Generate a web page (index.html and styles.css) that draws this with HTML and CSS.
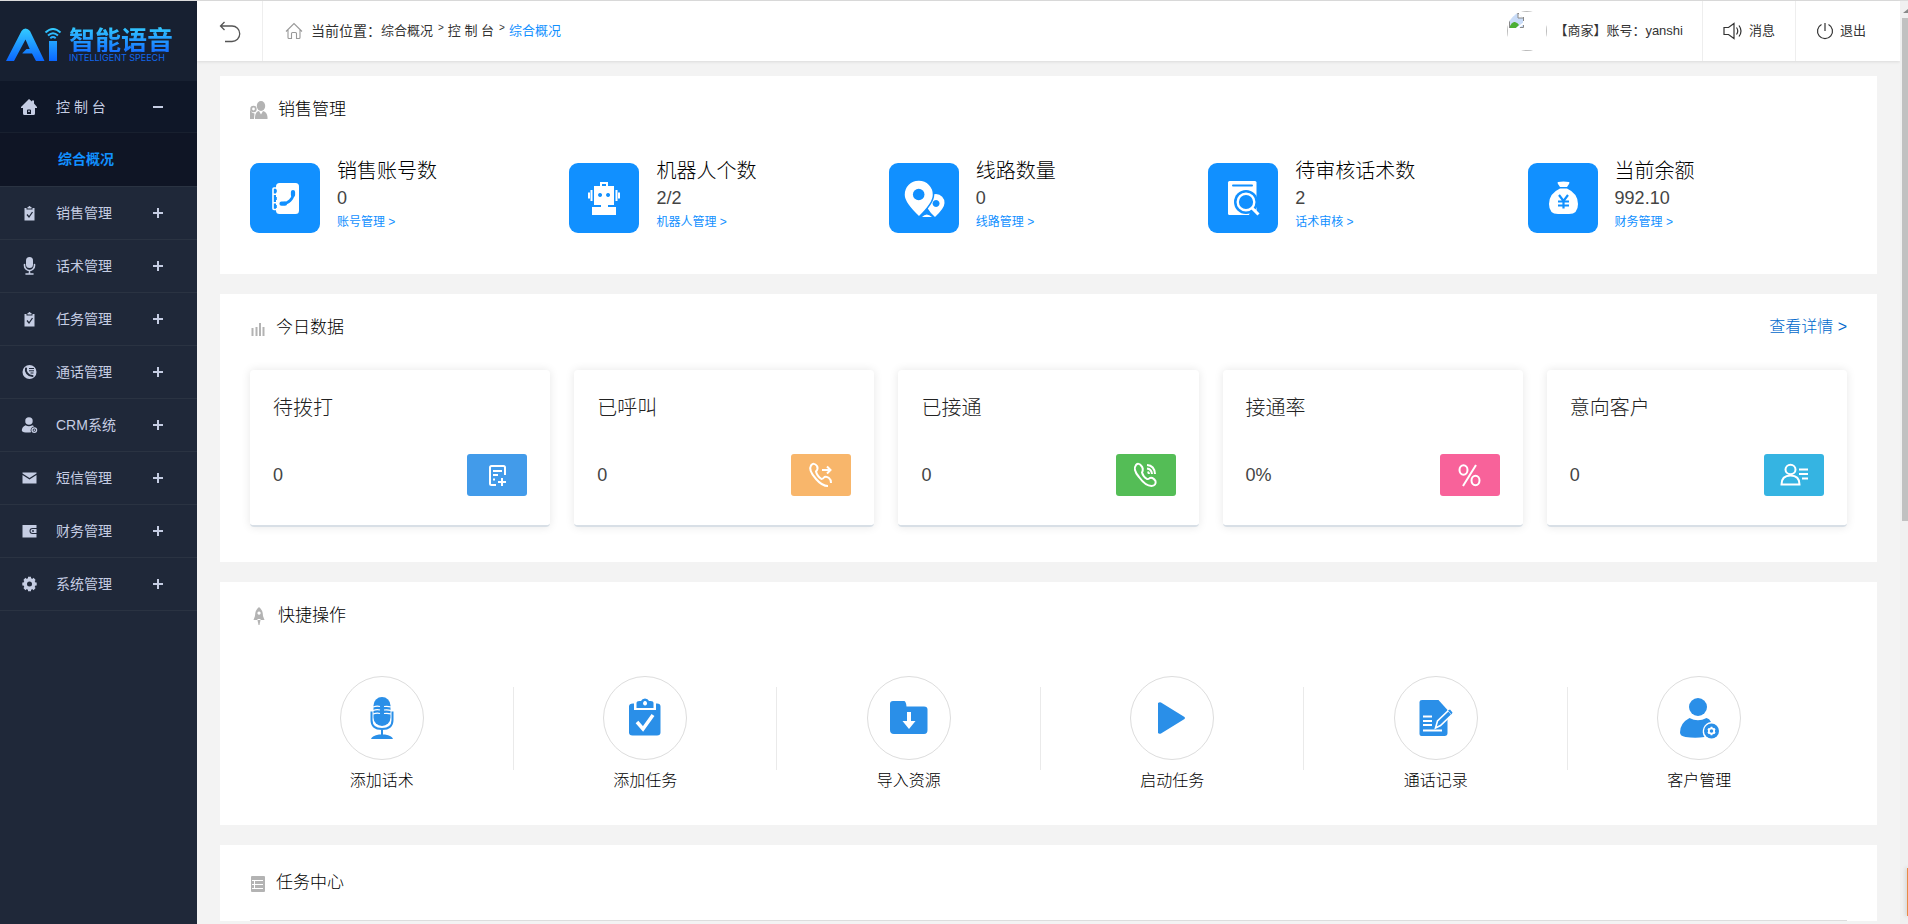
FILE: index.html
```html
<!DOCTYPE html>
<html lang="zh-CN">
<head>
<meta charset="utf-8">
<title>智能语音 - 综合概况</title>
<link rel="stylesheet" href="styles.css">
</head>
<body>
<svg class="defs" aria-hidden="true">
  <symbol id="i-plus" viewBox="0 0 10 10"><path d="M0 5h10M5 0v10" stroke="currentColor" stroke-width="2"/></symbol>
  <symbol id="i-minus" viewBox="0 0 10 10"><path d="M0 5h10" stroke="currentColor" stroke-width="2"/></symbol>
  <symbol id="i-home" viewBox="0 0 16 16"><path fill="currentColor" fill-rule="evenodd" d="M8 0l3 2.600V1.500h2V4.500L16 8v1h-2v5.500q0 1.500-1.500 1.500h-9Q2 16 2 14.500V9H0V8zM6 15h4v-3.500q0-1-1-1H7q-1 0-1 1zm1.200-3.500h1.600V13H7.200z"/></symbol>
  <symbol id="i-clip" viewBox="0 0 16 16"><path fill="currentColor" fill-rule="evenodd" d="M3 3h2v1.500h6V3h2v12.500H3zM6 3V2h1a1 1 0 0 1 2 0h1v1.500H6z"/><path d="M5.500 9.500l2 2.500 3.500-5" fill="none" stroke="#1f2839" stroke-width="1.300"/></symbol>
  <symbol id="i-mic" viewBox="0 0 16 18"><rect x="4.500" y="0" width="7" height="11" rx="3.500" fill="currentColor"/><path d="M3 7.500v1a5 5 0 0 0 10 0v-1M8 13.500V17M4.500 17h7" fill="none" stroke="currentColor" stroke-width="1.600" stroke-linecap="round"/></symbol>
  <symbol id="i-call" viewBox="0 0 16 16"><circle cx="8" cy="8" r="7" fill="currentColor"/><path d="M4.500 4.500c-1 3 2 7.500 6.500 7.500" fill="none" stroke="#1f2839" stroke-width="2" stroke-linecap="round"/><path d="M7.500 4.500h5M7.500 6.800h5M9 9h3" stroke="#1f2839" stroke-width="1"/></symbol>
  <symbol id="i-user" viewBox="0 0 30 30"><ellipse cx="14" cy="7.500" rx="7" ry="7" fill="currentColor"/><path fill="currentColor" d="M7.500 15.500q6.500 3.500 13 0q2 .8 3 2.500a7 7 0 0 0-5.500 10.500q-7 1.500-13.500 0Q.5 27.500.5 25q.5-6.500 7-9.500z"/><circle cx="24" cy="24.500" r="4.300" fill="none" stroke="currentColor" stroke-width="2.400"/><circle cx="24" cy="24.500" r="1.600" fill="currentColor"/></symbol>
  <symbol id="i-mail" viewBox="0 0 16 16"><path fill="currentColor" d="M1 2.500h14v1L8 8 1 3.500zM1 5l7 4.500L15 5v8.500H1z"/></symbol>
  <symbol id="i-wallet" viewBox="0 0 16 16"><path fill="currentColor" fill-rule="evenodd" d="M1 2h14v3h-4a3 3 0 0 0 0 6h4v3.500H1z"/><path fill="currentColor" d="M11 6h4v4h-4a2 2 0 0 1 0-4z"/><circle cx="11.500" cy="8" r=".9" fill="#1f2839"/></symbol>
  <symbol id="i-gear" viewBox="0 0 16 16"><circle cx="8" cy="8" r="4.300" fill="none" stroke="currentColor" stroke-width="3.600"/><path d="M8 .8v14.400M.8 8h14.400M2.900 2.900l10.200 10.200M13.100 2.900L2.900 13.100" stroke="currentColor" stroke-width="3" stroke-dasharray="3.200 8 3.200"/></symbol>
</svg>
<div class="app">
  <aside class="sidebar">
    <a class="logo" href="#" aria-label="智能语音">
      <svg class="logo-mark" width="56" height="35" viewBox="0 0 56 35">
        <defs>
          <linearGradient id="lg" gradientUnits="userSpaceOnUse" x1="0" y1="0" x2="0" y2="34"><stop offset="0" stop-color="#35d0ff"/><stop offset="1" stop-color="#0a66ff"/></linearGradient>
        </defs>
        <path fill="url(#lg)" fill-rule="evenodd" d="M0 34L15.500 4Q17 1.500 19.500 1.500T24 4l14.500 30H30l-4-7.500H16.500V26l4-4h3.200L19.500 12.500 8 34z"/>
        <path fill="url(#lg)" d="M43 14h8v20h-8z"/>
        <path d="M39.500 5.500q7.500-7 15 0M42 8.500q5-4.500 10 0M44.300 11.200q2.700-2.400 5.400 0" fill="none" stroke="url(#lg)" stroke-width="2"/>
      </svg>
      <span class="logo-text"><span class="logo-cn">智能语音</span><span class="logo-en">INTELLIGENT SPEECH</span></span>
    </a>
    <nav class="menu">
      <a class="item open" href="#"><svg class="mi"><use href="#i-home"/></svg><span>控 制 台</span><svg class="sign"><use href="#i-minus"/></svg></a>
      <a class="sub" href="#">综合概况</a>
      <a class="item" href="#"><svg class="mi"><use href="#i-clip"/></svg><span>销售管理</span><svg class="sign"><use href="#i-plus"/></svg></a>
      <a class="item" href="#"><svg class="mi tall"><use href="#i-mic"/></svg><span>话术管理</span><svg class="sign"><use href="#i-plus"/></svg></a>
      <a class="item" href="#"><svg class="mi"><use href="#i-clip"/></svg><span>任务管理</span><svg class="sign"><use href="#i-plus"/></svg></a>
      <a class="item" href="#"><svg class="mi"><use href="#i-call"/></svg><span>通话管理</span><svg class="sign"><use href="#i-plus"/></svg></a>
      <a class="item" href="#"><svg class="mi"><use href="#i-user"/></svg><span>CRM系统</span><svg class="sign"><use href="#i-plus"/></svg></a>
      <a class="item" href="#"><svg class="mi"><use href="#i-mail"/></svg><span>短信管理</span><svg class="sign"><use href="#i-plus"/></svg></a>
      <a class="item" href="#"><svg class="mi"><use href="#i-wallet"/></svg><span>财务管理</span><svg class="sign"><use href="#i-plus"/></svg></a>
      <a class="item" href="#"><svg class="mi"><use href="#i-gear"/></svg><span>系统管理</span><svg class="sign"><use href="#i-plus"/></svg></a>
    </nav>
  </aside>

  <div class="page">
    <header class="topbar">
      <button class="back" type="button" aria-label="返回"><svg width="22" height="22" viewBox="0 0 22 22" fill="none" stroke="#555" stroke-width="1.300"><path d="M1.500 5H13a7.200 7.200 0 0 1 0 15.500H6M5.500 1l-4 4 4 4"/></svg></button>
      <nav class="crumbs">
        <svg width="18" height="18" viewBox="0 0 18 18" fill="none" stroke="#999" stroke-width="1.100"><path d="M1 9.500L9 1.500l8 8M3 8v7.500q0 1 1 1h2.500v-5q0-1 1-1h3q1 0 1 1v5H14q1 0 1-1V8"/></svg>
        <span class="where">当前位置：</span><a href="#">综合概况</a><span class="gt">&gt;</span><a href="#">控 制 台</a><span class="gt">&gt;</span><a class="current" href="#">综合概况</a>
      </nav>
      <div class="account">
        <span class="avatar" role="img" aria-label="头像"><svg width="40" height="40" viewBox="0 0 40 40"><path d="M2 2h9l5 5v10H2z" fill="#c9dcf8"/><path d="M11 2v5h5" fill="#fff" stroke="#888"/><path d="M2 17q3-7 6-6t4 3l-3 3z" fill="#4caf35"/><path d="M9 17l8-6v2l-5 4z" fill="#fff"/><path d="M2.500 5v12M6 2.500h6M16.500 6v4M16.500 14v2.500H13" fill="none" stroke="#888"/><path d="M.5.500h39v39H.500z" fill="none" stroke="#bbb"/></svg></span>
        <span class="label">【商家】账号：yanshi</span>
      </div>
      <a class="tool" href="#"><svg width="20" height="18" viewBox="0 0 20 18" fill="none" stroke="#333" stroke-width="1.200"><path d="M1 5.500h4.500L11 1.500v15l-5.500-4H1zM13.500 5.500q2.500 3.500 0 7M16 3.500q4 5.500 0 11"/></svg><span class="label">消息</span></a>
      <a class="tool last" href="#"><svg width="18" height="18" viewBox="0 0 18 18" fill="none" stroke="#333" stroke-width="1.200"><path d="M9 1v8M5.500 2.500a7.500 7.500 0 1 0 7 0"/></svg><span class="label">退出</span></a>
    </header>

    <main class="content">
      <section class="panel">
        <div class="head"><svg class="hi" viewBox="0 0 18 18" fill="#b3b3b3"><ellipse cx="11" cy="5" rx="4.200" ry="5"/><path d="M5 16q.5-5.500 4-6l2 3.500 2-3.500q4 .8 4.500 6v2H5z"/><circle cx="3.500" cy="8" r="2.300" fill="none" stroke="#b3b3b3" stroke-width="1.800"/><path d="M0 18V8q1 4 4.500 4.500L4 18z"/></svg><h2>销售管理</h2></div>
        <div class="stats">
          <div class="stat">
            <span class="tile"><svg viewBox="0 0 70 70" fill="#fff"><rect x="26" y="20" width="23" height="31" rx="3.500"/><path d="M26 25h-2q-1 0-1 1v19.500q0 1 1 1h2M23 31.200h3M23 39.800h3" fill="none" stroke="#fff" stroke-width="1.600"/><path d="M26 24v23" stroke="#1190ff" stroke-width="1.600" stroke-dasharray="0 2.500 3 4.500 3 5 3 9"/><path d="M33 40.500c5.500 0 10-4.500 10.300-10" fill="none" stroke="#1190ff" stroke-width="2.800"/><path d="M31.500 40.700h3.500M43 32v-3" fill="none" stroke="#1190ff" stroke-width="4.200" stroke-linecap="round"/></svg></span>
            <div class="info"><h3>销售账号数</h3><b>0</b><a href="#">账号管理 &gt;</a></div>
          </div>
          <div class="stat">
            <span class="tile"><svg viewBox="0 0 70 70" fill="#fff"><path d="M32 23v-3h6v3" fill="none" stroke="#fff" stroke-width="2"/><path fill-rule="evenodd" d="M25 23h20v19h-6v2h8v8H23v-8h9v-2h-7zM31 30a2 2 0 1 0 .1 0zM39 30a2 2 0 1 0 .1 0z"/><path d="M22.500 27v11M47.500 27v11M20 29.500v6M50 29.500v6" stroke="#fff" stroke-width="2"/></svg></span>
            <div class="info"><h3>机器人个数</h3><b>2/2</b><a href="#">机器人管理 &gt;</a></div>
          </div>
          <div class="stat">
            <span class="tile"><svg viewBox="0 0 70 70" fill="#fff"><path fill-rule="evenodd" d="M47 31a8.500 8.500 0 0 1 8.500 9q0 5-9.500 14Q36 45 38 39a9 9 0 0 1 9-8zm0 6a3.500 3.500 0 1 0 .1 0z"/><path d="M30 17a14.500 14.500 0 0 1 14.500 15q0 8-14.500 22Q15 40 15 32A14.500 14.500 0 0 1 30 17z" stroke="#1190ff" stroke-width="1.500"/><path d="M33 54q4.500-5 10 0z"/><circle cx="29.700" cy="31.500" r="5.800" fill="#1190ff"/></svg></span>
            <div class="info"><h3>线路数量</h3><b>0</b><a href="#">线路管理 &gt;</a></div>
          </div>
          <div class="stat">
            <span class="tile"><svg viewBox="0 0 70 70" fill="#fff"><rect x="20" y="18" width="28.500" height="34" rx="1.500"/><path d="M25 22.500h19" stroke="#1190ff" stroke-width="2" stroke-linecap="round"/><circle cx="38" cy="39" r="12" fill="#1190ff"/><path d="M44 44l6 8h-9z" fill="#1190ff"/><circle cx="38" cy="39" r="8.300" fill="none" stroke="#fff" stroke-width="2.400"/><path d="M44 45l6.500 6.500" stroke="#fff" stroke-width="3"/></svg></span>
            <div class="info"><h3>待审核话术数</h3><b>2</b><a href="#">话术审核 &gt;</a></div>
          </div>
          <div class="stat">
            <span class="tile"><svg viewBox="0 0 70 70" fill="#fff"><path d="M30 19q5.500-1 11 0 1 .6 0 2l-2 3h-7l-2-3q-1-1.400 0-2zM32 25.500h7q11 5 11 15.500 0 10-9 10H30q-9 0-9-10 0-10.500 11-15.500z"/><path d="M31 32l4.500 6 4.500-6M30 38.500h11M30 42.500h11M35.500 38v7.500" fill="none" stroke="#1190ff" stroke-width="2.200"/></svg></span>
            <div class="info"><h3>当前余额</h3><b>992.10</b><a href="#">财务管理 &gt;</a></div>
          </div>
        </div>
      </section>

      <section class="panel">
        <div class="head"><svg class="hi low" viewBox="0 0 16 18"><path d="M2.500 17V9M6.500 17V8M10 17V4M13.500 17V8" stroke="#b3b3b3" stroke-width="2"/></svg><h2>今日数据</h2><a class="more" href="#">查看详情 &gt;</a></div>
        <div class="cards">
          <article class="card"><h3>待拨打</h3><div class="row"><b>0</b><span class="badge blue"><svg viewBox="0 0 28 28"><path d="M13 24H8.500Q7 24 7 22.500V6.500Q7 5 8.500 5h12Q22 5 22 6.500V14M10 10h9M10 14h5M10 18.500h2M19 17v8M15 21h8"/></svg></span></div></article>
          <article class="card"><h3>已呼叫</h3><div class="row"><b>0</b><span class="badge orange"><svg viewBox="0 0 28 28"><path d="M21 25Q15 25 9 18 1 9 4 4.500q3-3.500 6 .5 1.500 2.500-1 5.500 1 4.500 5.500 7.500 1.500 0 3-2 2-1 4.500 1 2 1.500 2 5M15 9h8M20 5.500L23.500 9 20 12.500"/></svg></span></div></article>
          <article class="card"><h3>已接通</h3><div class="row"><b>0</b><span class="badge green"><svg viewBox="0 0 28 28"><path d="M9 4.500Q6.500 1.500 4 4q-3.500 4.500 3 12 6.500 9 12.500 9 5-.5 4-5-2.500-4-5.500-3-2 1.500-3 1-4-2.500-5-6.500 2-4-1-7zM15 4q7.500.5 8 9M15 7.500q4.500.5 5 5.500M15.500 11q1.500.5 1.500 2"/></svg></span></div></article>
          <article class="card"><h3>接通率</h3><div class="row"><b>0%</b><span class="badge pink"><svg viewBox="0 0 28 28"><path d="M20 4L7 25"/><ellipse cx="7.500" cy="9" rx="4" ry="4.700"/><ellipse cx="19.500" cy="19.500" rx="4" ry="4.700"/></svg></span></div></article>
          <article class="card"><h3>意向客户</h3><div class="row"><b>0</b><span class="badge cyan"><svg viewBox="0 0 28 28"><ellipse cx="10.500" cy="8.500" rx="5" ry="4.800"/><path d="M1.500 23.500q0-9 9-9t9 9zM19 8.500h9M19 13h9M22 17.500h6"/></svg></span></div></article>
        </div>
      </section>

      <section class="panel">
        <div class="head"><svg class="hi" viewBox="0 0 18 18" fill="#b3b3b3"><path fill-rule="evenodd" d="M9 0q4 3 4 9l1.500 4H11l-1-1H8l-1 1H3.500L5 9Q5 3 9 0zm0 4.500a1.600 1.600 0 1 0 .1 0z"/><path d="M7.500 13h3L9.500 18h-1z"/></svg><h2>快捷操作</h2></div>
        <div class="actions">
          <a class="action" href="#"><span class="ring"><svg viewBox="0 0 42 42"><rect x="12.500" y="0" width="17" height="29" rx="8.500" fill="#2a8fe8"/><path d="M12 10q4-1.500 7-.5M23 9.500q4-.5 7 .5M12 13.500q4-1.500 7-.5M23 13q4-.5 7 .5M12 17q4-1.500 7-.5M23 16.500q4-.5 7 .5" fill="none" stroke="#fff" stroke-width="1.200"/><path d="M10.500 14.500V23q0 9 10.500 9t10.500-9v-8.500M21 32v6" fill="none" stroke="#2a8fe8" stroke-width="2"/><path d="M10 42q1-3.500 8-4.500h6q7 1 8 4.500z" fill="#2a8fe8"/></svg></span>添加话术</a>
          <a class="action" href="#"><span class="ring"><svg viewBox="0 0 42 42" fill="#2a8fe8"><path d="M9 6.500h1V13h22V6.500h1q3.500 0 3.500 3v26q0 3-3.500 3H8.500q-3.500 0-3.500-3v-26q0-3 4-3z"/><path fill-rule="evenodd" d="M12.500 6q0-2 3-2h1.500q1-2.500 4-2.500T25 4h1.500q3 0 3 2v5h-17zM21 4a2 2.300 0 1 0 .1 0z"/><path d="M13 25l6 7 10-14" fill="none" stroke="#fff" stroke-width="3.500"/></svg></span>添加任务</a>
          <a class="action" href="#"><span class="ring"><svg viewBox="0 0 42 42"><path d="M5 4h11q2 0 2.500 5.500H36q3.500 0 3.500 3V33q0 4-3.500 4H6q-4 0-4-4V7q0-3 3-3z" fill="#2a8fe8"/><path d="M21 15v12" stroke="#fff" stroke-width="4"/><path d="M14.500 24h13L21 32z" fill="#fff"/></svg></span>导入资源</a>
          <a class="action" href="#"><span class="ring"><svg viewBox="0 0 42 42"><path d="M8 5.500q1-.7 2 0L33.500 20q1 1 0 2L10 36.500q-2 .7-3-.5v-30z" fill="#2a8fe8"/></svg></span>启动任务</a>
          <a class="action" href="#"><span class="ring"><svg viewBox="0 0 42 42"><path d="M7 3h16.500l9 10v23q0 3-3 3h-23q-2 0-2-2V5q0-2 2.500-2z" fill="#2a8fe8"/><path d="M8 19.500h9M8 24h9M8 28h9M8 33.500h19" stroke="#fff" stroke-width="2.200"/><path d="M20.500 31l2-7L33.500 13.500l3.500 4-11.500 11z" fill="#2a8fe8" stroke="#fff" stroke-width="1.600"/><path d="M33 13.500l2-1 2.500 3-1 2" fill="#2a8fe8"/></svg></span>通话记录</a>
          <a class="action" href="#"><span class="ring"><svg viewBox="0 0 42 42"><circle cx="20" cy="10" r="9" fill="#2a8fe8"/><path d="M11.500 21q8.500 4.500 17 0 3 .7 4.500 4a9.500 9.500 0 0 0-6.500 15q-9 1.500-19 0Q2 39 2 35.500 2 26 11.500 21z" fill="#2a8fe8"/><circle cx="33.500" cy="34" r="7.500" fill="#2a8fe8"/><circle cx="33.500" cy="34" r="2.700" fill="none" stroke="#fff" stroke-width="1.800"/><path d="M33.500 29.800v1.700M33.500 36.500v1.700M29.900 31.900l1.400.8M35.700 35.300l1.400.8M37.100 31.900l-1.400.8M31.300 35.300l-1.400.8" stroke="#fff" stroke-width="1.800"/></svg></span>客户管理</a>
        </div>
      </section>

      <section class="panel">
        <div class="head tall"><svg class="hi low" viewBox="0 0 16 18"><rect x="1" y="1" width="14" height="16" rx="1" fill="#b3b3b3"/><path d="M2 5.500h11M2 9.500h11M2 13.500h11M4.500 5v9" stroke="#fff"/></svg><h2>任务中心</h2></div>
      </section>
    </main>
  </div>

  <div class="scroll" aria-hidden="true"><i class="arrow"></i><i class="thumb"></i><i class="float"></i></div>
</div>
</body>
</html>
```
FILE: styles.css
```css
* { box-sizing: border-box; }

body {
  margin: 0;
  height: 100vh;
  overflow: hidden;
  background: #f3f3f3;
  color: #333;
  font-family: "Liberation Sans", "Noto Sans CJK SC", sans-serif;
  font-size: 14px;
}

a { color: inherit; text-decoration: none; }
h2, h3 { margin: 0; font-weight: 300; }
.defs { display: none; }

.app {
  display: flex;
  height: 100%;
  border-top: 1px solid #dcdcdc;
}

/* sidebar */
.sidebar {
  flex: none;
  width: 197px;
  background: #1f2839;
  color: #c5cde3;
}

.logo {
  display: flex;
  align-items: flex-start;
  gap: 7px;
  height: 80px;
  padding: 24px 0 0 6px;
  background: #172031;
}

.logo-mark { margin-top: 2px; }
.logo-text { display: flex; flex-direction: column; }

.logo-cn {
  font-family: "Noto Sans CJK SC", sans-serif;
  font-size: 26px;
  font-weight: 700;
  line-height: 27px;
  background: linear-gradient(#35d0ff, #1470ff);
  background-clip: text;
  -webkit-background-clip: text;
  color: transparent;
}

.logo-en {
  font-family: Inter, "Liberation Sans", sans-serif;
  font-size: 9px;
  line-height: 12px;
  color: #1268ee;
}

.item {
  display: flex;
  align-items: center;
  height: 53px;
  padding-left: 21px;
  border-bottom: 1px solid #2a3342;
}

.item.open {
  height: 52px;
  padding-left: 20px;
  background: #0f1728;
  border-color: #18202f;
}

.item span { flex: 1; padding: 0 0 2px 18px; }
.mi { width: 18px; height: 16px; }
.mi.tall { height: 18px; }
.item:not(.open) .mi { width: 17px; }
.sign { width: 10px; height: 10px; margin-right: 34px; }

.sub {
  display: block;
  height: 54px;
  padding-left: 58px;
  line-height: 52px;
  font-weight: 700;
  color: #1190ff;
  background: #0f1525;
  border-bottom: 1px solid #2a3342;
}

/* top bar */
.page { flex: 1; min-width: 0; }

.topbar {
  display: flex;
  height: 60px;
  background: #fff;
  box-shadow: 0 1px 3px rgba(0, 0, 0, .1);
  font-size: 13px;
}

.back {
  width: 66px;
  padding: 4px 0 0;
  background: none;
  border: 0;
  border-right: 1px solid #eee;
}

.crumbs {
  display: flex;
  flex: 1;
  align-items: center;
  padding-left: 22px;
}

.crumbs a { padding-bottom: 4px; }
.where { padding: 0 0 3px 8px; font-size: 14px; }
.gt { padding: 0 4px 7px 5px; font-size: 10px; }
.crumbs .current { color: #1190ff; }
.label { padding-bottom: 4px; }

.account {
  display: flex;
  align-items: center;
  gap: 7px;
  padding-right: 19px;
  border-right: 1px solid #eee;
}

.avatar {
  width: 40px;
  height: 40px;
  overflow: hidden;
  border-radius: 50%;
}

.avatar svg { display: block; }

.tool {
  display: flex;
  align-items: center;
  gap: 6px;
  padding: 0 20px;
  border-right: 1px solid #eee;
}

.tool.last { padding-right: 34px; border: 0; }

/* panels */
.content {
  display: flex;
  flex-direction: column;
  gap: 20px;
  padding: 15px 23px;
}

.panel {
  padding: 0 30px;
  background: #fff;
}

.head {
  display: flex;
  align-items: center;
  gap: 10px;
  height: 66px;
}

.head.tall {
  height: 76px;
  border-bottom: 1px solid #ddd;
}

.head h2 {
  flex: 1;
  padding-bottom: 4px;
  font-size: 17px;
  color: #000;
}

.hi { width: 18px; height: 18px; margin-top: 2px; }
.hi.low { width: 16px; }

.more {
  padding-bottom: 4px;
  font-size: 16px;
  font-weight: 300;
  color: #0068cc;
}

.stats {
  display: grid;
  grid-template-columns: repeat(5, 1fr);
  padding: 15px 0 41px;
}

.stat { display: flex; align-items: flex-end; gap: 17px; }

.tile {
  width: 70px;
  height: 70px;
  background: #1190ff;
  border-radius: 9px;
}

.info { display: flex; flex-direction: column; }
.info h3 { font-size: 20px; line-height: 28px; color: #000; }
.info b { font-size: 18px; font-weight: 400; line-height: 26px; color: #444; }
.info a { font-size: 12px; line-height: 22px; color: #1190ff; }

.cards {
  display: grid;
  grid-template-columns: repeat(5, 1fr);
  gap: 24px;
  padding: 10px 0 35px;
}

.card {
  padding: 24px 23px 29px;
  border-bottom: 2px solid #d8dfe6;
  border-radius: 4px;
  box-shadow: 0 0 10px rgba(0, 0, 0, .1);
  color: #444;
}

.card h3 { font-size: 20px; line-height: 28px; color: #222; }

.row {
  display: flex;
  align-items: center;
  justify-content: space-between;
  margin-top: 32px;
}

.row b { font-size: 18px; font-weight: 400; }

.badge {
  display: grid;
  place-items: center;
  width: 60px;
  height: 42px;
  border-radius: 3px;
}

.badge svg {
  width: 28px;
  height: 28px;
  fill: none;
  stroke: #fff;
  stroke-width: 2;
  overflow: visible;
}

.blue { background: #429bea; }
.orange { background: #f8b66b; }
.green { background: #54bd56; }
.pink { background: #f8629a; }
.cyan { background: #35b4e2; }

.actions {
  display: grid;
  grid-template-columns: repeat(6, 16.5%);
  padding: 28px 0 33px;
}

.action {
  position: relative;
  display: flex;
  flex-direction: column;
  align-items: center;
  gap: 10px;
  font-size: 16px;
  font-weight: 300;
  line-height: 22px;
  color: #000;
}

.action:not(:last-child)::after {
  content: "";
  position: absolute;
  top: 11px;
  right: 0;
  width: 1px;
  height: 83px;
  background: #eaeaea;
}

.ring {
  display: grid;
  place-items: center;
  width: 84px;
  height: 84px;
  border: 1px solid #ddd;
  border-radius: 50%;
}

.ring svg { width: 42px; height: 42px; }

/* scroll strip */
.scroll {
  position: relative;
  flex: none;
  width: 8px;
  padding-left: 2px;
  overflow: hidden;
  background: #f0f0f0;
}

.arrow {
  display: block;
  height: 17px;
}

.arrow::before {
  content: "";
  position: absolute;
  top: 8px;
  left: 3px;
  border: 5px solid transparent;
  border-top: 0;
  border-bottom: 4px solid #888;
}

.thumb {
  display: block;
  height: 54.5%;
  background: #c1c1c1;
}

.float {
  position: absolute;
  right: 0;
  bottom: 8px;
  width: 1px;
  height: 48px;
  background: #e98a45;
  box-shadow: 0 0 4px #888;
}
```
